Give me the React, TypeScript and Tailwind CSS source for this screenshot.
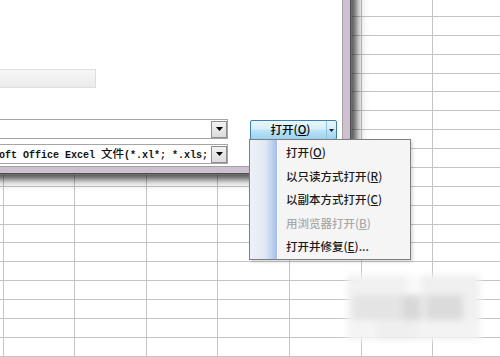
import React from "react";

const items = [
  { label: "打开", key: "O", suffix: "", disabled: false },
  { label: "以只读方式打开", key: "R", suffix: "", disabled: false },
  { label: "以副本方式打开", key: "C", suffix: "", disabled: false },
  { label: "用浏览器打开", key: "B", suffix: "", disabled: true },
  { label: "打开并修复", key: "E", suffix: "...", disabled: false },
];

function ComboArrow() {
  return (
    <div className="w-[16px] h-[17px] flex items-center justify-center border border-[#8e8e8e] bg-[linear-gradient(#f2f2f2,#dcdcdc)]">
      <svg width="7" height="4" viewBox="0 0 7 4">
        <path d="M0 0h7L3.5 4z" fill="#000" />
      </svg>
    </div>
  );
}

export default function App() {
  const cells = Array.from({ length: 8 * 20 });
  return (
    <div className="relative w-[500px] h-[357px] overflow-hidden bg-white">
      {/* spreadsheet grid */}
      <div className="ml-[-68px] mt-[-2px] grid grid-cols-[repeat(8,71.6px)] auto-rows-[18.89px]">
        {cells.map((_, i) => (
          <div key={i} className="border-r border-b border-[#c4c4c4]" />
        ))}
      </div>

      {/* dialog window */}
      <div className="absolute left-[-100px] top-[-50px] border-r-[7px] border-b-[6px] border-[#cdc1d1] shadow-[1px_1px_0_#4e4e4e,2px_2px_0_#6a6a6a,4px_4px_6px_2px_rgba(0,0,0,0.55),6px_6px_10px_3px_rgba(0,0,0,0.25)]">
        <div className="w-[443px] h-[217px] bg-white border-r border-b border-[#a3a3a3] flex flex-col">
          <div className="mt-[119px] w-[196px] h-[19px] border border-[#dedede] bg-[linear-gradient(#f7f7f7,#ebebeb)]" />
          <div className="mt-[31px] flex items-start">
            <div className="w-[328px] h-[20px] border border-[#a5a5a5] bg-white flex items-center justify-end">
              <ComboArrow />
            </div>
            <button className="ml-[22px] mt-[1px] w-[87px] h-[20px] border border-[#3c7fb1] rounded-[2px] bg-[linear-gradient(#e8f5fc_0%,#d8effb_45%,#bde4f8_50%,#9ed2ef_100%)] flex items-stretch p-0">
              <span className="flex-1 flex items-center justify-center pl-[4px] text-[11.5px] font-medium leading-none text-black [font-family:'Noto_Sans_CJK_SC',sans-serif]">
                打开(<span className="underline underline-offset-1">O</span>)
              </span>
              <span className="w-[10px] border-l border-[#8fc3e3] flex items-center justify-center">
                <svg width="5" height="3" viewBox="0 0 5 3">
                  <path d="M0 0h5L2.5 3z" fill="#222" />
                </svg>
              </span>
            </button>
          </div>
          <div className="mt-[4px] w-[328px] h-[20px] border border-[#a5a5a5] bg-white flex items-center">
            <div className="flex-1 overflow-hidden whitespace-nowrap pl-[62px] text-[10px] font-bold leading-none text-[#111] [font-family:'Liberation_Mono',monospace]">
              Microsoft Office Excel <span className="text-[11.5px] font-medium [font-family:'Noto_Sans_CJK_SC',sans-serif]">文件</span>(*.xl*; *.xls; *.xlsx; *.xlsm)
            </div>
            <ComboArrow />
          </div>
        </div>
      </div>

      {/* dropdown menu */}
      <div className="absolute left-[249px] top-[139px] w-[162px] h-[121px] border border-[#7e7e7e] bg-[#f5f5f5] flex shadow-[2px_2px_3px_rgba(0,0,0,0.15)]">
        <div className="w-[28px] h-full border-r border-white bg-[linear-gradient(to_right,#edf1f8_0%,#e2e9f4_55%,#c2d3ef_80%,#a3bee9_100%)]" />
        <div className="flex-1 flex flex-col pt-[1px]">
          {items.map((it) => (
            <div
              key={it.key}
              className={
                "h-[23.6px] flex items-center pl-[8px] text-[11.5px] font-medium leading-none [font-family:'Noto_Sans_CJK_SC',sans-serif] " +
                (it.disabled ? "text-[#a8a8a8]" : "text-[#1a1a1a]")
              }
            >
              {it.label}(<span className="underline underline-offset-1">{it.key}</span>){it.suffix}
            </div>
          ))}
        </div>
      </div>

      {/* blurred watermark */}
      <div className="absolute left-[347px] top-[275px] w-[133px] h-[65px] flex flex-col blur-[3px]">
        <div className="h-[20px] flex">
          <div className="w-[60px] bg-[#f1f1f1]" />
          <div className="w-[15px] bg-[#f9f9f9]" />
          <div className="w-[58px] bg-[#f0f0f0]" />
        </div>
        <div className="h-[25px] flex">
          <div className="w-[6px] bg-[#f2f2f2]" />
          <div className="w-[50px] bg-[#e4e4e4]" />
          <div className="w-[17px] bg-[#d8d8d8]" />
          <div className="w-[7px] bg-[#e8e8e8]" />
          <div className="w-[36px] bg-[#dbdbdb]" />
          <div className="w-[17px] bg-[#f0f0f0]" />
        </div>
        <div className="h-[20px] flex">
          <div className="w-[30px] bg-[#f4f4f4]" />
          <div className="w-[40px] bg-[#efefef]" />
          <div className="w-[63px] bg-[#f3f3f3]" />
        </div>
      </div>
    </div>
  );
}
